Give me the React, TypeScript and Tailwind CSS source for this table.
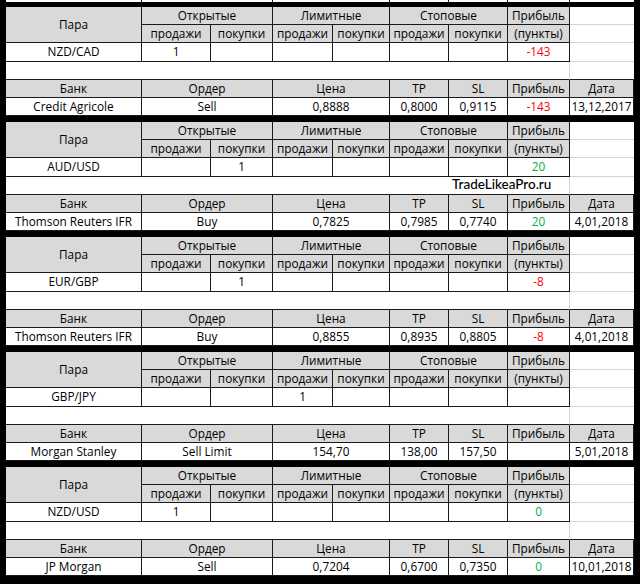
import React from "react";

type Block = {
  pair: string;
  pos: number; // column index 1..6 holding the "1"
  profit: string;
  profitColor?: "red" | "green";
  bank: string;
  order: string;
  price: string;
  tp: string;
  sl: string;
  date: string;
  note?: string;
};

const BLOCKS: Block[] = [
  { pair: "NZD/CAD", pos: 1, profit: "-143", profitColor: "red", bank: "Credit Agricole", order: "Sell", price: "0,8888", tp: "0,8000", sl: "0,9115", date: "13,12,2017" },
  { pair: "AUD/USD", pos: 2, profit: "20", profitColor: "green", bank: "Thomson Reuters IFR", order: "Buy", price: "0,7825", tp: "0,7985", sl: "0,7740", date: "4,01,2018", note: "TradeLikeaPro.ru" },
  { pair: "EUR/GBP", pos: 2, profit: "-8", profitColor: "red", bank: "Thomson Reuters IFR", order: "Buy", price: "0,8855", tp: "0,8935", sl: "0,8805", date: "4,01,2018" },
  { pair: "GBP/JPY", pos: 3, profit: "", bank: "Morgan Stanley", order: "Sell Limit", price: "154,70", tp: "138,00", sl: "157,50", date: "5,01,2018" },
  { pair: "NZD/USD", pos: 1, profit: "0", profitColor: "green", bank: "JP Morgan", order: "Sell", price: "0,7204", tp: "0,6700", sl: "0,7350", date: "10,01,2018" },
];

const GRID = "grid grid-cols-[136px_69px_62px_60px_57px_59px_59px_62px_64px]";
const cell = "flex items-center justify-center border-r border-b border-[#1a1a1a] whitespace-nowrap leading-none";
const head = `${cell} bg-[#d9d9d9]`;
const body = `${cell} bg-white`;
const ghost = "bg-white border-b border-[#d4d4d4]";

function colorOf(c?: "red" | "green") {
  if (c === "red") return "text-[#ff0000]";
  if (c === "green") return "text-[#00b050]";
  return "";
}

function TradeBlock({ b }: { b: Block }) {
  return (
    <div className={`${GRID} grid-rows-[18px_18px_19px_18px_18px_18px]`}>
      {/* header row 1 */}
      <div className={`${head} row-span-2`}>Пара</div>
      <div className={`${head} col-span-2`}>Открытые</div>
      <div className={`${head} col-span-2`}>Лимитные</div>
      <div className={`${head} col-span-2`}>Стоповые</div>
      <div className={head}>Прибыль</div>
      <div className={ghost} />

      {/* header row 2 */}
      {["продажи", "покупки", "продажи", "покупки", "продажи", "покупки"].map((t, i) => (
        <div key={i} className={head}>{t}</div>
      ))}
      <div className={head}>(пункты)</div>
      <div className={ghost} />

      {/* pair row */}
      <div className={body}>{b.pair}</div>
      {[1, 2, 3, 4, 5, 6].map((i) => (
        <div key={i} className={body}>{b.pos === i ? "1" : ""}</div>
      ))}
      <div className={`${body} ${colorOf(b.profitColor)}`}>{b.profit}</div>
      <div className={ghost} />

      {/* blank row */}
      <div className="col-span-6 bg-white border-b border-[#1a1a1a]" />
      <div className="col-span-2 relative bg-white border-b border-r border-[#1a1a1a] border-r-[#d4d4d4]">
        {b.note && (
          <span className="absolute left-[3px] top-[1px] font-['Lato',sans-serif] font-medium text-[13.5px] leading-none">{b.note}</span>
        )}
      </div>
      <div className="bg-white border-b border-[#1a1a1a]" />

      {/* bank header */}
      <div className={head}>Банк</div>
      <div className={`${head} col-span-2`}>Ордер</div>
      <div className={`${head} col-span-2`}>Цена</div>
      <div className={head}>TP</div>
      <div className={head}>SL</div>
      <div className={head}>Прибыль</div>
      <div className={head}>Дата</div>

      {/* bank row */}
      <div className={body}>{b.bank}</div>
      <div className={`${body} col-span-2`}>{b.order}</div>
      <div className={`${body} col-span-2`}>{b.price}</div>
      <div className={body}>{b.tp}</div>
      <div className={body}>{b.sl}</div>
      <div className={`${body} ${colorOf(b.profitColor)}`}>{b.profit}</div>
      <div className={body}>{b.date}</div>
    </div>
  );
}

export default function App() {
  return (
    <div className="w-[640px] h-[584px] overflow-hidden bg-black px-[6px] font-['Open_Sans',sans-serif] font-medium text-[11.8px] text-black">
      {/* tail of the previous table */}
      <div className={`${GRID} h-[2px]`}>
        <div className="bg-white border-r border-[#1a1a1a]" />
        <div className="col-span-2 bg-white border-r border-[#1a1a1a]" />
        <div className="col-span-2 bg-white border-r border-[#1a1a1a]" />
        <div className="bg-white border-r border-[#1a1a1a]" />
        <div className="bg-white border-r border-[#1a1a1a]" />
        <div className="bg-white border-r border-[#1a1a1a]" />
        <div className="bg-white" />
      </div>
      <div className="flex flex-col gap-[6px] pt-[5px]">
        {BLOCKS.map((b, i) => (
          <TradeBlock key={i} b={b} />
        ))}
      </div>
    </div>
  );
}
